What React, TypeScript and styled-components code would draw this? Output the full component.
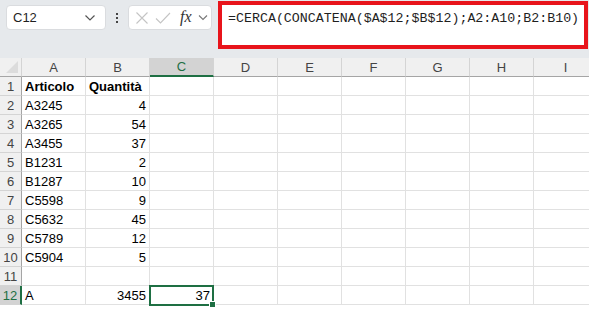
import styled, { createGlobalStyle } from 'styled-components';

const GlobalStyle = createGlobalStyle`
  html, body {
    margin: 0;
    padding: 0;
    background: #ffffff;
    overflow: hidden;
  }
  body {
    font-family: 'Liberation Sans', Arial, sans-serif;
  }
`;

const GREEN = '#1e6f43';

type Row = [string, string];

const rows: Row[] = [
  ['Articolo', 'Quantità'],
  ['A3245', '4'],
  ['A3265', '54'],
  ['A3455', '37'],
  ['B1231', '2'],
  ['B1287', '10'],
  ['C5598', '9'],
  ['C5632', '45'],
  ['C5789', '12'],
  ['C5904', '5'],
  ['', ''],
  ['A', '3455'],
];

const columns = ['A', 'B', 'C', 'D', 'E', 'F', 'G', 'H', 'I'];

const App = (): JSX.Element => {
  return (
    <Page>
      <GlobalStyle />
      <Toolbar>
        <NameBox>
          <NameText>C12</NameText>
          <Chevron width="12" height="8" viewBox="0 0 12 8">
            <path d="M1.5 1.5 L6 6 L10.5 1.5" fill="none" stroke="#555" strokeWidth="1.2" />
          </Chevron>
        </NameBox>
        <Dots>
          <Dot />
          <Dot />
          <Dot />
        </Dots>
        <FxBox>
          <svg width="14" height="14" viewBox="0 0 14 14">
            <path d="M1.5 1.5 L12.5 12.5 M12.5 1.5 L1.5 12.5" stroke="#c4c4c4" strokeWidth="1.1" fill="none" />
          </svg>
          <svg width="16" height="14" viewBox="0 0 16 14">
            <path d="M1 7.5 L5.5 12 L15 2" stroke="#c4c4c4" strokeWidth="1.1" fill="none" />
          </svg>
          <FxLabel>fx</FxLabel>
          <svg width="10" height="7" viewBox="0 0 10 7">
            <path d="M1 1.5 L5 5.5 L9 1.5" fill="none" stroke="#777" strokeWidth="1.1" />
          </svg>
        </FxBox>
        <FormulaBox>=CERCA(CONCATENA($A$12;$B$12);A2:A10;B2:B10)</FormulaBox>
      </Toolbar>
      <Sheet>
        <Corner>
          <svg width="12" height="12" viewBox="0 0 12 12">
            <path d="M12 0 L12 12 L0 12 Z" fill="#dcdcdc" />
          </svg>
        </Corner>
        {columns.map((c) => (
          <ColHeader key={c} $active={c === 'C'}>
            {c}
          </ColHeader>
        ))}
        {rows.map((r, idx) => {
          const rowNum = idx + 1;
          const active = rowNum === 12;
          return (
            <RowGroup key={rowNum}>
              <RowHeader $active={active}>{rowNum}</RowHeader>
              <Cell $bold={rowNum === 1}>{r[0]}</Cell>
              <Cell $bold={rowNum === 1} $right={rowNum !== 1}>
                {r[1]}
              </Cell>
              {columns.slice(2).map((c) =>
                active && c === 'C' ? (
                  <SelectedCell key={c}>
                    37
                    <Handle />
                  </SelectedCell>
                ) : (
                  <Cell key={c} />
                ),
              )}
            </RowGroup>
          );
        })}
      </Sheet>
    </Page>
  );
};

export default App;

const Page = styled.div`
  width: 589px;
  height: 310px;
  overflow: hidden;
  background: #ffffff;
`;

const Toolbar = styled.div`
  height: 58px;
  background: #e6e9ec;
  display: flex;
  align-items: flex-start;
  padding: 5px 0 0 6px;
  box-sizing: border-box;
`;

const NameBox = styled.div`
  width: 100px;
  height: 25px;
  box-sizing: border-box;
  background: #ffffff;
  border: 1px solid #dadcdf;
  border-radius: 4px;
  display: flex;
  align-items: center;
  justify-content: space-between;
  padding: 0 9px 0 6px;
`;

const NameText = styled.span`
  font-size: 13px;
  color: #1f1f1f;
`;

const Chevron = styled.svg`
  display: block;
`;

const Dots = styled.div`
  width: 22px;
  height: 25px;
  display: flex;
  flex-direction: column;
  align-items: center;
  justify-content: center;
  gap: 2px;
`;

const Dot = styled.span`
  width: 2px;
  height: 2px;
  background: #444;
`;

const FxBox = styled.div`
  width: 84px;
  height: 25px;
  box-sizing: border-box;
  background: #ffffff;
  border: 1px solid #dadcdf;
  border-radius: 4px;
  display: flex;
  align-items: center;
  gap: 6px;
  padding: 0 3px 0 6px;
`;

const FxLabel = styled.span`
  font-family: 'Liberation Serif', 'Times New Roman', serif;
  font-style: italic;
  font-size: 16px;
  color: #333;
  margin-left: 3px;
  margin-top: -2px;
`;

const FormulaBox = styled.div`
  margin-left: 6px;
  margin-top: -4px;
  width: 370px;
  height: 48px;
  box-sizing: border-box;
  background: #ffffff;
  border: 4px solid #e8141b;
  padding: 6px 0 0 6px;
  font-family: 'Liberation Mono', 'Courier New', monospace;
  font-size: 13.3px;
  color: #1f1f1f;
  white-space: nowrap;
`;

const Sheet = styled.div`
  display: grid;
  grid-template-columns: 22px repeat(9, 64px);
  grid-auto-rows: 19px;
`;

const RowGroup = styled.div`
  display: contents;
`;

const Corner = styled.div`
  background: #f0f0f0;
  border-right: 1px solid #d4d4d4;
  border-bottom: 1px solid #a5a5a5;
  box-sizing: border-box;
  display: flex;
  align-items: flex-end;
  justify-content: flex-end;
  padding: 0 3px 3px 0;
`;

const ColHeader = styled.div<{ $active?: boolean }>`
  background: ${({ $active }) => ($active ? '#d3d3d3' : '#f0f0f0')};
  border-right: 1px solid #d4d4d4;
  border-bottom: ${({ $active }) => ($active ? `2px solid ${GREEN}` : '1px solid #a5a5a5')};
  box-sizing: border-box;
  display: flex;
  align-items: center;
  justify-content: center;
  font-size: 13px;
  color: ${({ $active }) => ($active ? GREEN : '#444')};
`;

const RowHeader = styled.div<{ $active?: boolean }>`
  background: ${({ $active }) => ($active ? '#d3d3d3' : '#f0f0f0')};
  border-bottom: 1px solid #d4d4d4;
  border-right: ${({ $active }) => ($active ? `2px solid ${GREEN}` : '1px solid #a5a5a5')};
  box-sizing: border-box;
  display: flex;
  align-items: center;
  justify-content: center;
  font-size: 13px;
  color: ${({ $active }) => ($active ? GREEN : '#444')};
`;

const Cell = styled.div<{ $bold?: boolean; $right?: boolean }>`
  border-right: 1px solid #e1e1e1;
  border-bottom: 1px solid #e1e1e1;
  box-sizing: border-box;
  display: flex;
  align-items: flex-end;
  justify-content: ${({ $right }) => ($right ? 'flex-end' : 'flex-start')};
  padding: 0 3px 1px 3px;
  font-size: 13px;
  font-weight: ${({ $bold }) => ($bold ? 700 : 400)};
  color: #000;
  white-space: nowrap;
  overflow: hidden;
`;

const SelectedCell = styled.div`
  position: relative;
  margin: -1px 0 -1px -1px;
  border: 2px solid ${GREEN};
  box-sizing: border-box;
  display: flex;
  align-items: flex-end;
  justify-content: flex-end;
  padding: 0 2px 1px 3px;
  font-size: 13px;
  color: #000;
`;

const Handle = styled.span`
  position: absolute;
  right: -4px;
  bottom: -4px;
  width: 5px;
  height: 5px;
  background: ${GREEN};
  border: 1px solid #fff;
`;
